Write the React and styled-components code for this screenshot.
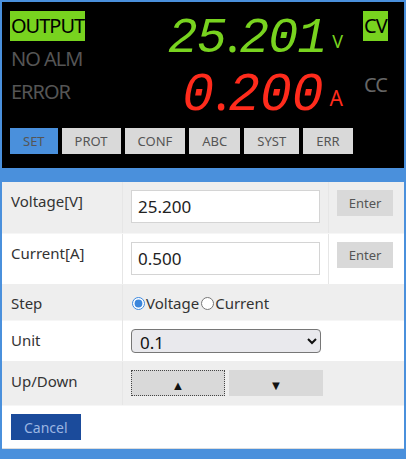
import styled, { createGlobalStyle } from 'styled-components';

const GlobalStyle = createGlobalStyle`
  html, body {
    margin: 0;
    padding: 0;
    background: #4a90dc;
  }
  body {
    padding: 2px 4px 11px 2px;
    font-family: "Noto Sans", "Open Sans", sans-serif;
  }
`;

const Panel = styled.div`
  width: 402px;
  background: #000;
  padding: 9px 8px 14px;
  box-sizing: border-box;
`;

const Display = styled.div`
  display: flex;
  height: 108px;
`;

const StatusCol = styled.div`
  display: flex;
  flex-direction: column;
  align-items: flex-start;
  gap: 3px;
  width: 110px;
`;

const Lamp = styled.div`
  font-size: 20px;
  line-height: 30px;
  height: 30px;
  padding: 0 1px;
  letter-spacing: -1px;
  color: ${(p) => (p.$on ? '#000' : '#555')};
  background: ${(p) => (p.$on ? '#78d31f' : 'transparent')};
`;

const Readings = styled.div`
  flex: 1;
  min-width: 0;
  display: flex;
  flex-direction: column;
  align-items: flex-end;
  padding-right: 20px;
`;

const Reading = styled.div`
  display: flex;
  align-items: flex-start;
  white-space: pre;
  height: ${(p) => p.$h}px;
  color: ${(p) => p.$color};
`;

const Digits = styled.span`
  font-family: "Liberation Mono", "DejaVu Sans Mono", monospace;
  font-style: italic;
  font-size: ${(p) => p.$size}px;
  line-height: ${(p) => p.$lh}px;
  letter-spacing: ${(p) => p.$track}px;
`;

const Dot = styled.span`
  font-family: "Noto Sans", sans-serif;
  font-style: normal;
  letter-spacing: 0;
`;

const Unit = styled.span`
  font-size: ${(p) => p.$size}px;
  line-height: ${(p) => p.$size}px;
  margin: ${(p) => p.$top}px 0 0 6px;
`;

const ModeCol = styled.div`
  display: flex;
  flex-direction: column;
  align-items: flex-start;
  width: 33px;
`;

const Mode = styled.div`
  font-size: 20px;
  line-height: ${(p) => (p.$gap ? 22 : 30)}px;
  height: 30px;
  margin-top: ${(p) => (p.$gap ? 33 : 0)}px;
  padding: 0 1px;
  letter-spacing: -1px;
  color: ${(p) => (p.$on ? '#000' : '#666')};
  background: ${(p) => (p.$on ? '#78d31f' : 'transparent')};
`;

const Tabs = styled.div`
  display: flex;
  gap: 4px;
  margin-top: 9px;
`;

const Tab = styled.button`
  height: 26px;
  padding: 0 13px;
  border: none;
  font-family: inherit;
  font-size: 13px;
  color: #555;
  background: ${(p) => (p.$active ? '#4a90dc' : '#d9d9d9')};
`;

const Form = styled.div`
  margin-top: 14px;
  width: 402px;
  background: #fff;
  border-bottom: 1px solid #ddd;
  font-size: 15px;
  color: #333;
`;

const Row = styled.div`
  display: grid;
  grid-template-columns: ${(p) => (p.$split ? '120px 206px 1fr' : '120px 1fr')};
  height: ${(p) => p.$h}px;
  background: ${(p) => (p.$shade ? '#eee' : '#fff')};
  border-bottom: 1px solid ${(p) => (p.$shade ? '#f6f6f6' : '#eee')};
  box-sizing: border-box;
`;

const Cell = styled.div`
  padding: ${(p) => p.$pad || '8px'};
  border-left: ${(p) => (p.$first ? 'none' : '1px solid #e6e6e6')};
  display: flex;
  align-items: flex-start;
  gap: ${(p) => (p.$tight ? 0 : 4)}px;
`;

const Label = styled.div`
  padding-left: 1px;
  line-height: 22px;
`;

const TextInput = styled.input`
  width: 189px;
  height: 33px;
  box-sizing: border-box;
  border: 1px solid #d4d4d4;
  padding: 0 6px;
  font-family: inherit;
  font-size: 17px;
  color: #222;
  background: #fff;
`;

const SmallButton = styled.button`
  width: 56px;
  height: 26px;
  border: none;
  background: #d9d9d9;
  color: #555;
  font-family: inherit;
  font-size: 13px;
`;

const RadioLabel = styled.label`
  display: flex;
  align-items: center;
  line-height: 22px;
  margin-right: 1px;

  input {
    margin: 0 1px 0 1px;
    width: 13px;
    height: 13px;
    accent-color: #3b86dc;
  }
`;

const Select = styled.select`
  width: 190px;
  height: 24px;
  font-family: inherit;
  font-size: 17px;
  color: #111;
  background: #e9e9ed;
  border: 1px solid #777;
  border-radius: 4px;
  padding: 0 4px;
`;

const StepButton = styled.button`
  width: 94px;
  height: 26px;
  border: 1px ${(p) => (p.$focus ? 'dotted #444' : 'solid #d9d9d9')};
  background: #d9d9d9;
  font-size: 13px;
  line-height: 1;
  color: #111;
  padding-top: 5px;
`;

const Footer = styled.div`
  padding: 8px 9px 8px;
`;

const Cancel = styled.button`
  height: 26px;
  padding: 0 13px;
  border: none;
  background: #1b4b9b;
  color: #9cb6e2;
  font-family: inherit;
  font-size: 14px;
`;

const tabs = ['SET', 'PROT', 'CONF', 'ABC', 'SYST', 'ERR'];

export default function App() {
  return (
    <>
      <GlobalStyle />
      <Panel>
        <Display>
          <StatusCol>
            <Lamp $on>OUTPUT</Lamp>
            <Lamp>NO ALM</Lamp>
            <Lamp>ERROR</Lamp>
          </StatusCol>
          <Readings>
            <Reading $h={58} $color="#78d31f">
              <Digits $size={50} $lh={44} $track={-1}>25<Dot>.</Dot>201</Digits>
              <Unit $size={18} $top={21}>V</Unit>
            </Reading>
            <Reading $h={50} $color="#ff2b1c">
              <Digits $size={53} $lh={42} $track={0}>0<Dot>.</Dot>200</Digits>
              <Unit $size={21} $top={19}>A</Unit>
            </Reading>
          </Readings>
          <ModeCol>
            <Mode $on>CV</Mode>
            <Mode $gap>CC</Mode>
          </ModeCol>
        </Display>
        <Tabs>
          {tabs.map((t, i) => (
            <Tab key={t} $active={i === 0}>{t}</Tab>
          ))}
        </Tabs>
      </Panel>
      <Form>
        <Row $split $shade $h={52}>
          <Cell $first><Label>Voltage[V]</Label></Cell>
          <Cell><TextInput defaultValue="25.200" /></Cell>
          <Cell><SmallButton>Enter</SmallButton></Cell>
        </Row>
        <Row $split $h={51}>
          <Cell $first><Label>Current[A]</Label></Cell>
          <Cell><TextInput defaultValue="0.500" /></Cell>
          <Cell><SmallButton>Enter</SmallButton></Cell>
        </Row>
        <Row $shade $h={36}>
          <Cell $first $pad="7px 8px"><Label>Step</Label></Cell>
          <Cell $pad="7px 8px" $tight>
            <RadioLabel><input type="radio" name="step" defaultChecked />Voltage</RadioLabel>
            <RadioLabel><input type="radio" name="step" />Current</RadioLabel>
          </Cell>
        </Row>
        <Row $h={41}>
          <Cell $first><Label>Unit</Label></Cell>
          <Cell>
            <Select defaultValue="0.1">
              <option>0.1</option>
              <option>0.01</option>
              <option>0.001</option>
            </Select>
          </Cell>
        </Row>
        <Row $shade $h={44}>
          <Cell $first><Label>Up/Down</Label></Cell>
          <Cell>
            <StepButton $focus>▲</StepButton>
            <StepButton>▼</StepButton>
          </Cell>
        </Row>
        <Footer>
          <Cancel>Cancel</Cancel>
        </Footer>
      </Form>
    </>
  );
}
